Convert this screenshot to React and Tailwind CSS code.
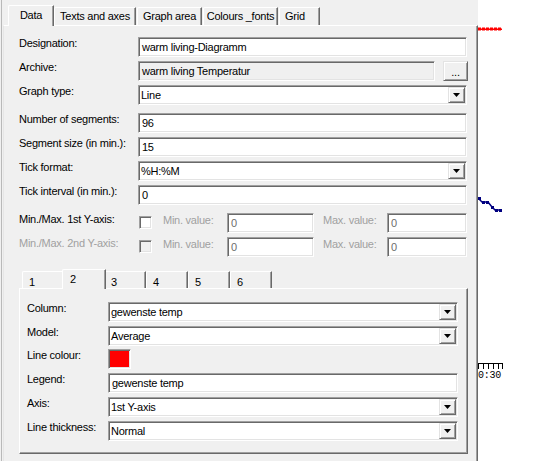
import React from "react"

const sunken =
  "border border-t-[#a0a0a0] border-l-[#a0a0a0] border-b-white border-r-white shadow-[inset_1px_1px_0_#696969,inset_-1px_-1px_0_#e3e3e3]"
const raised =
  "border border-t-[#e3e3e3] border-l-[#e3e3e3] border-b-[#696969] border-r-[#696969] shadow-[inset_1px_1px_0_#ffffff,inset_-1px_-1px_0_#a0a0a0]"

function Arrow() {
  return (
    <svg width="7" height="4" viewBox="0 0 7 4">
      <polygon points="0,0 7,0 3.5,4" fill="#000" />
    </svg>
  )
}

function Input({ value, w, gray, dim }) {
  return (
    <div
      className={`${sunken} h-[20px] pl-[3px] leading-[18px] whitespace-nowrap overflow-hidden ${
        gray ? "bg-[#f0f0f0]" : "bg-white"
      } ${dim ? "text-[#6d6d6d]" : "text-black"}`}
      style={{ width: w }}
    >
      {value}
    </div>
  )
}

function Select({ value, w }) {
  return (
    <div className={`${sunken} h-[20px] bg-white flex items-center`} style={{ width: w }}>
      <span className="flex-1 pl-[2px] leading-[18px] whitespace-nowrap overflow-hidden">{value}</span>
      <div className={`${raised} w-[17px] h-[16px] m-[1px] bg-[#f0f0f0] flex items-center justify-center`}>
        <Arrow />
      </div>
    </div>
  )
}

function Row({ label, children, mt, lw = 119, dim }) {
  return (
    <div className="flex h-[20px]" style={{ marginTop: mt }}>
      <div className={`leading-[13px] whitespace-nowrap ${dim ? "text-[#a0a0a0]" : ""}`} style={{ width: lw }}>
        {label}
      </div>
      {children}
    </div>
  )
}

function Check({ gray }) {
  return (
    <div
      className={`${sunken} w-[13px] h-[13px] mt-[3px] ml-[1px] ${gray ? "bg-[#f0f0f0]" : "bg-white"}`}
    />
  )
}

function MinMax({ label, mt, dim }) {
  return (
    <Row label={label} mt={mt} dim={dim}>
      <Check gray={dim} />
      <div className="w-[11px]" />
      <div className="w-[64px] text-[#a0a0a0] leading-[13px] mt-[1px]">Min. value:</div>
      <Input value="0" w={87} dim />
      <div className="w-[9px]" />
      <div className="w-[64px] text-[#a0a0a0] leading-[13px] mt-[1px]">Max. value:</div>
      <Input value="0" w={80} dim />
    </Row>
  )
}

const outerTabs = [
  { name: "Data", w: 46, ml: 0, active: true },
  { name: "Texts and axes", w: 82, ml: 0 },
  { name: "Graph area", w: 65, ml: 1 },
  { name: "Colours _fonts", w: 75, ml: 1 },
  { name: "Grid", w: 41, ml: 1, left: true },
]

const innerTabs = ["1", "2", "3", "4", "5", "6"]

export default function App() {
  return (
    <div className="w-[553px] h-[461px] flex bg-white overflow-hidden font-['Liberation_Sans',Arial,sans-serif] text-[11px] tracking-[-0.25px] text-black">
      {/* dialog */}
      <div className="w-[478px] h-full bg-[#f0f0f0] pl-[1px] flex">
        <div className="flex-1 border-l border-l-[#b9b9b9] pl-[1px] flex flex-col">
          {/* tab strip */}
          <div className="h-[26px] flex items-end pl-[5px]">
            {outerTabs.map((t) =>
              t.active ? (
                <div
                  key={t.name}
                  className="relative z-10 h-[21px] bg-[#f0f0f0] border-t border-l border-t-white border-l-white border-r border-r-[#696969] shadow-[inset_-1px_0_0_#a0a0a0] flex items-center justify-center pb-[2px] rounded-tl-[2px]"
                  style={{ width: t.w, marginLeft: t.ml }}
                >
                  {t.name}
                </div>
              ) : (
                <div
                  key={t.name}
                  className={`h-[18px] mb-[1px] border-t border-l border-t-white border-l-white border-r border-r-[#696969] shadow-[inset_-1px_0_0_#a0a0a0] flex items-center rounded-tl-[2px] ${
                    t.left ? "pl-[5px]" : "justify-center"
                  }`}
                  style={{ width: t.w, marginLeft: t.ml }}
                >
                  {t.name}
                </div>
              )
            )}
          </div>

          {/* page */}
          <div className="-mt-[1px] flex-1 border-t border-l border-t-white border-l-[#e6e6e6] border-r border-r-[#696969] shadow-[inset_-1px_0_0_#a0a0a0] pl-[15px] pt-[11px] flex flex-col">
            <Row label="Designation:">
              <Input value="warm living-Diagramm" w={329} />
            </Row>
            <Row label="Archive:" mt={4}>
              <Input value="warm living Temperatur" w={297} gray />
              <div className={`${raised} ml-[8px] w-[25px] h-[20px] bg-[#f0f0f0] flex items-end justify-center pb-[3px] leading-[10px]`}>
                ...
              </div>
            </Row>
            <Row label="Graph type:" mt={4}>
              <Select value="Line" w={329} />
            </Row>
            <Row label="Number of segments:" mt={8}>
              <Input value="96" w={329} />
            </Row>
            <Row label="Segment size (in min.):" mt={4}>
              <Input value="15" w={329} />
            </Row>
            <Row label="Tick format:" mt={4}>
              <Select value="%H:%M" w={329} />
            </Row>
            <Row label="Tick interval (in min.):" mt={4}>
              <Input value="0" w={329} />
            </Row>
            <MinMax label="Min./Max. 1st Y-axis:" mt={8} />
            <MinMax label="Min./Max. 2nd Y-axis:" mt={4} dim />

            {/* inner tabs */}
            <div className="mt-[12px] w-[449px]">
              <div className="h-[20px] flex items-end pl-[3px]">
                {innerTabs.map((n) =>
                  n === "2" ? (
                    <div
                      key={n}
                      className="relative z-10 -mx-[2px] w-[44px] h-[20px] bg-[#f0f0f0] border-t border-l border-t-white border-l-white border-r border-r-[#696969] shadow-[inset_-1px_0_0_#a0a0a0] pl-[7px] pt-[3px] leading-[13px] rounded-tl-[2px]"
                    >
                      {n}
                    </div>
                  ) : (
                    <div
                      key={n}
                      className="w-[42px] h-[17px] mb-[1px] border-t border-l border-t-white border-l-white border-r border-r-[#696969] shadow-[inset_-1px_0_0_#a0a0a0] pl-[6px] pt-[4px] leading-[12px] rounded-tl-[2px]"
                    >
                      {n}
                    </div>
                  )
                )}
              </div>
              <div className="-mt-[1px] h-[166px] border border-t-white border-l-white border-r-[#696969] border-b-[#696969] shadow-[inset_-1px_-1px_0_#a0a0a0] pl-[7px] pt-[13px] flex flex-col">
                <Row label="Column:" lw={81}>
                  <Select value="gewenste temp" w={350} />
                </Row>
                <Row label="Model:" lw={81} mt={4}>
                  <Select value="Average" w={350} />
                </Row>
                <Row label="Line colour:" lw={81} mt={3}>
                  <div className={`${sunken} w-[23px] h-[20px] bg-[#ff0000]`} />
                </Row>
                <Row label="Legend:" lw={81} mt={4}>
                  <Input value="gewenste temp" w={350} />
                </Row>
                <Row label="Axis:" lw={81} mt={4}>
                  <Select value="1st Y-axis" w={350} />
                </Row>
                <Row label="Line thickness:" lw={81} mt={4}>
                  <Select value="Normal" w={350} />
                </Row>
              </div>
            </div>
          </div>
        </div>
      </div>

      {/* chart fragment behind the dialog */}
      <div className="w-[75px] h-full bg-white">
        <svg width="75" height="461" viewBox="0 0 75 461">
          <rect x="0" y="28.5" width="24" height="1.5" fill="#ff0000" />
          {[0, 4, 8, 12, 16, 20].map((x) => (
            <rect key={x} x={x} y="27.5" width="3" height="3" fill="#ff0000" />
          ))}
          <polyline
            points="0,198 4,202 10,202 14,207 17,210 24,210"
            fill="none"
            stroke="#000080"
            strokeWidth="1.5"
          />
          {[
            [0, 197],
            [4, 201],
            [8, 201],
            [13, 206],
            [17, 209],
            [21, 209],
          ].map(([x, y]) => (
            <rect key={x} x={x} y={y} width="3" height="3" fill="#000080" />
          ))}
          <line x1="0" y1="363.5" x2="25" y2="363.5" stroke="#000" strokeWidth="1" />
          {[0.5, 5.5, 10.5, 15.5, 20.5, 24.5].map((x) => (
            <line key={x} x1={x} y1="363" x2={x} y2="369" stroke="#000" strokeWidth="1" />
          ))}
          <text x="0" y="378" fontSize="10" fontFamily="Liberation Mono, monospace" fill="#000">
            0:30
          </text>
        </svg>
      </div>
    </div>
  )
}
